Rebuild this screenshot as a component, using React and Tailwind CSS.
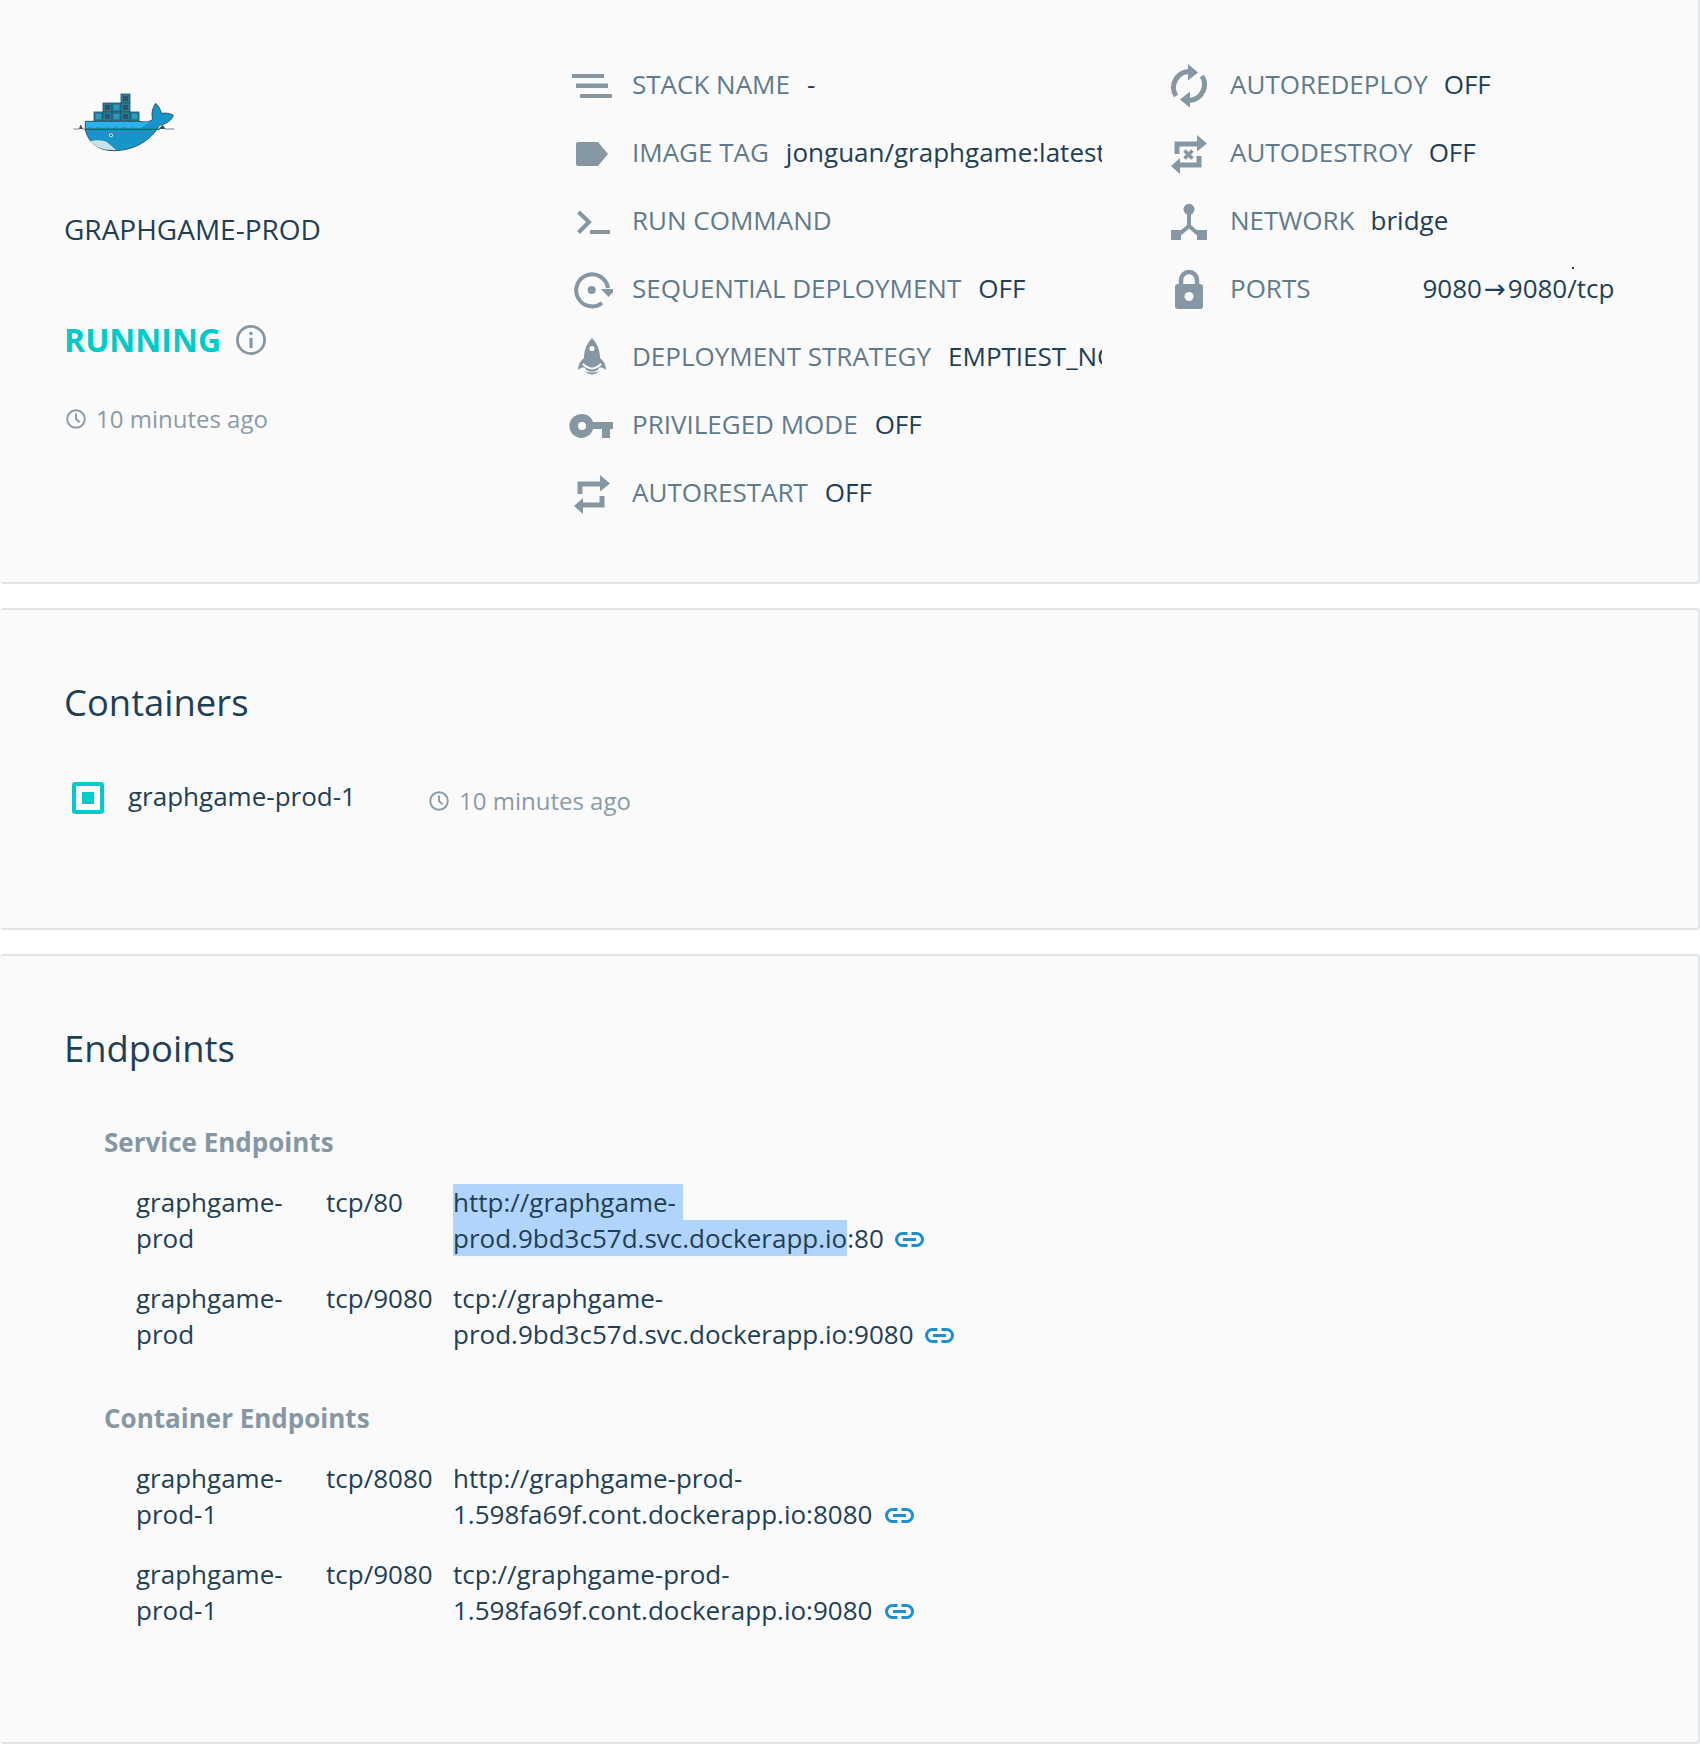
const G = "#8497a2";

function Ic({ children }) {
  return (
    <svg width="44" height="44" viewBox="0 0 44 44" fill={G} className="shrink-0">
      {children}
    </svg>
  );
}

const Retweet = ({ dx = 0 }) => (
  <g transform={`translate(${dx} 0)`}>
    <path d="M11 23V13H32" fill="none" stroke={G} strokeWidth="5" />
    <path d="M31 4L41 12.5L31 20.5Z" />
    <path d="M33 25V34H13" fill="none" stroke={G} strokeWidth="5" />
    <path d="M14 27V43L5 35Z" />
  </g>
);

const icons = {
  stack: (
    <Ic>
      <rect x="3" y="11" width="32" height="4" />
      <rect x="7" y="20.5" width="32" height="4.5" />
      <rect x="11" y="31" width="32" height="4" />
    </Ic>
  ),
  tag: (
    <Ic>
      <path d="M9 11H29L39 23L29 35H9A2 2 0 0 1 7 33V13A2 2 0 0 1 9 11Z" />
    </Ic>
  ),
  term: (
    <Ic>
      <path d="M9.5 13L20 23L9.5 33.5" fill="none" stroke={G} strokeWidth="4" />
      <rect x="21" y="31" width="20" height="4" />
    </Ic>
  ),
  seq: (
    <Ic>
      <path d="M39 21A16 16 0 1 0 33 36" fill="none" stroke={G} strokeWidth="4" />
      <circle cx="22.7" cy="23" r="4" />
      <path d="M32 22H47L39.5 30Z" />
    </Ic>
  ),
  rocket: (
    <Ic>
      <path d="M23 3C18 8 15 15 15 23C11 26 9 30 9 35C11 33 14 32 16 33C18 38 28 38 30 33C32 32 35 33 37 35C37 30 35 26 31 23C31 15 28 8 23 3Z" />
      <circle cx="23" cy="13.5" r="2.6" fill="#fafafa" />
      <path d="M14 29Q23 38 32 29" fill="none" stroke="#fafafa" strokeWidth="2" />
      <path d="M15.5 36Q23 43 30.5 36Q23 39 15.5 36Z" />
    </Ic>
  ),
  key: (
    <Ic>
      <path fillRule="evenodd" d="M13 11A12 12 0 0 1 24 19H45V26H41V35H33V26H24A12 12 0 1 1 13 11ZM13 19A4 4 0 1 0 13 27A4 4 0 1 0 13 19Z" />
    </Ic>
  ),
  restart: (
    <Ic>
      <Retweet />
    </Ic>
  ),
  redeploy: (
    <Ic>
      <path d="M11 33A16 16 0 0 1 24 8.5" fill="none" stroke={G} strokeWidth="5" />
      <path d="M23 1L33 9.5L23 17.5Z" />
      <g transform="rotate(180 24 23)">
        <path d="M11 33A16 16 0 0 1 24 8.5" fill="none" stroke={G} strokeWidth="5" />
        <path d="M23 1L33 9.5L23 17.5Z" />
      </g>
    </Ic>
  ),
  destroy: (
    <Ic>
      <Retweet dx={1} />
      <path d="M19.5 19.5L27.5 27.5M27.5 19.5L19.5 27.5" stroke={G} strokeWidth="3.6" fill="none" />
    </Ic>
  ),
  network: (
    <Ic>
      <circle cx="24" cy="10.3" r="5.5" />
      <path d="M24 12V27L11 38M24 27L37 38" fill="none" stroke={G} strokeWidth="4" />
      <rect x="6" y="31" width="10" height="10" />
      <rect x="32" y="31" width="10" height="10" />
    </Ic>
  ),
  lock: (
    <Ic>
      <path d="M16 20V13A8 8 0 0 1 32 13V20" fill="none" stroke={G} strokeWidth="4.5" />
      <rect x="10" y="17" width="28" height="25" rx="3" />
      <circle cx="24" cy="29.5" r="4.5" fill="#fafafa" />
    </Ic>
  ),
};

function Clock() {
  return (
    <svg width="20" height="20" viewBox="0 0 20 20" fill="none" stroke="#8a9ba8" strokeWidth="1.9" className="shrink-0">
      <circle cx="10" cy="10" r="8.8" />
      <path d="M10 4.5V10L13.6 13.4" />
    </svg>
  );
}

function LinkIcon({ far }) {
  return (
    <svg width="29" height="15" viewBox="0 0 29 15" fill="none" stroke="#1a8fd1" strokeWidth="3" className={`inline-block ${far ? "ml-[13px]" : "ml-[11px]"} align-[1px]`}>
      <path d="M12.5 1.5H7.5A6 6 0 0 0 7.5 13.5H12.5" />
      <path d="M16.5 1.5H21.5A6 6 0 0 1 21.5 13.5H16.5" />
      <path d="M8 7.5H21" />
    </svg>
  );
}

function Docker() {
  const box = (x, y, dark) => (
    <g key={`${x}-${y}`}>
      <rect x={x} y={y} width="27" height="27" fill="#1f7f9c" stroke="#2f5566" strokeWidth="2.5" />
      <rect x={x + 6} y={y + 6} width="15" height="15" fill={dark ? "#37505e" : "#2d9cbf"} />
    </g>
  );
  return (
    <svg width="130" height="80" viewBox="0 0 390 240" className="block">
      {box(183, 42, true)}
      {box(129, 69, true)}
      {box(156, 69, false)}
      {box(183, 69, true)}
      {box(102, 96, false)}
      {box(129, 96, true)}
      {box(156, 96, false)}
      {box(183, 96, true)}
      {box(210, 96, false)}
      <path d="M40 147H58L62 135L68 147H78" fill="#37505e" stroke="#37505e" strokeWidth="2" />
      <path d="M296 147L308 136L316 147H342" fill="#37505e" stroke="#37505e" strokeWidth="2" />
      <path d="M76 124H240C256 128 268 126 278 118C274 102 276 86 287 70C296 78 302 90 304 100C316 98 330 100 340 106C334 124 316 132 298 136C274 180 224 212 160 212C116 212 86 190 76 150Z" fill="#1795c8" stroke="#2f5566" strokeWidth="3" />
      <path d="M78 126H238C250 129 262 128 272 122C262 134 246 142 232 146C222 140 214 140 206 146C198 140 188 140 180 146C172 140 162 140 154 146C146 140 136 140 128 146C120 140 110 140 102 146C94 140 86 140 78 146Z" fill="#29b3ec" />
      <path d="M76 148H298" stroke="#37505e" strokeWidth="4" />
      <path d="M90 184C110 178 130 180 140 186C150 194 160 202 168 210C130 212 106 202 90 184Z" fill="#c7e3ea" />
      <circle cx="153" cy="166" r="6" fill="#d8e8ec" />
      <circle cx="153" cy="166" r="3" fill="#37505e" />
    </svg>
  );
}

function Row({ icon, label, value, gap = "ml-4", wide }) {
  return (
    <div className="flex items-center h-[68px] whitespace-nowrap">
      <span className={`${wide ? "w-[65px]" : "w-[63px]"} shrink-0`}>{icons[icon]}</span>
      <span className="text-[#5f7a8b] shrink-0 mb-[2px]">{label}</span>
      <span className={`text-[#1f3f55] mb-[2px] ${gap}`}>{value}</span>
    </div>
  );
}

function Ep({ name, proto, children }) {
  return (
    <div className="flex leading-[36px] text-[#1f3f55] mt-6 first:mt-0 pl-8">
      <div className="w-[190px] shrink-0">{name}</div>
      <div className="w-[127px] shrink-0">{proto}</div>
      <div>{children}</div>
    </div>
  );
}

export default function App() {
  return (
    <div className="bg-white min-h-[1752px] font-['Open_Sans',sans-serif] text-[26px] text-[#1f3f55] leading-[36px]">
      <section className="bg-[#fafafa] border-b-2 border-r-2 border-[#e1e5e9] rounded-b-[4px] h-[584px] pt-[51px] flex">
        <div className="w-[569px] pl-16 shrink-0">
          <div className="mt-[29px] -ml-1">
            <Docker />
          </div>
          <div className="mt-[51px] text-[28px]">GRAPHGAME-PROD</div>
          <div className="mt-[73px] flex items-center h-10">
            <span className="font-bold text-[32px] text-[#00cbcb]">RUNNING</span>
            <svg width="32" height="32" viewBox="0 0 32 32" fill="none" stroke={G} strokeWidth="2.8" className="ml-[14px]">
              <circle cx="16" cy="16" r="13.6" />
              <path d="M16 14V24" strokeWidth="3.2" />
              <circle cx="16" cy="9.5" r="1.8" fill={G} stroke="none" />
            </svg>
          </div>
          <div className="mt-[41px] flex items-center text-[24px] text-[#8a9ba8] ml-0.5">
            <Clock />
            <span className="ml-[10px]">10 minutes ago</span>
          </div>
        </div>
        <div className="w-[533px] shrink-0 overflow-hidden">
          <Row gap="ml-[17px]" icon="stack" label="STACK NAME" value="-" />
          <Row gap="ml-[17px]" icon="tag" label="IMAGE TAG" value="jonguan/graphgame:latest" />
          <Row gap="ml-[17px]" icon="term" label="RUN COMMAND" value="" />
          <Row gap="ml-[17px]" icon="seq" label="SEQUENTIAL DEPLOYMENT" value="OFF" />
          <Row gap="ml-[17px]" icon="rocket" label="DEPLOYMENT STRATEGY" value="EMPTIEST_NODE" />
          <Row gap="ml-[17px]" icon="key" label="PRIVILEGED MODE" value="OFF" />
          <Row gap="ml-[17px]" icon="restart" label="AUTORESTART" value="OFF" />
        </div>
        <div className="ml-[63px] flex-1">
          <Row wide icon="redeploy" label="AUTOREDEPLOY" value="OFF" />
          <Row wide icon="destroy" label="AUTODESTROY" value="OFF" />
          <Row wide icon="network" label="NETWORK" value="bridge" />
          <div className="relative">
            <Row
              wide
              icon="lock"
              label="PORTS"
              value={
                <>
                  9080<span className="font-['DejaVu_Sans',sans-serif] mx-[2px]">→</span>9080/tcp
                </>
              }
              gap="ml-[112px]"
            />
            <span className="absolute left-[407px] top-[12px] w-[2px] h-[2px] bg-[#1f3f55]" />
          </div>
        </div>
      </section>

      <section className="mt-6 bg-[#fafafa] border-y-2 border-r-2 border-[#e1e5e9] rounded-[4px] h-[322px] pt-[68px] pl-16">
        <h2 className="text-[36.4px] leading-[48px]">Containers</h2>
        <div className="mt-[52px] flex items-center h-9">
          <span className="ml-2 mt-[4px] w-8 h-8 border-4 border-[#00cbcb] rounded-[3px] flex items-center justify-center shrink-0">
            <span className="w-3 h-3 bg-[#00cbcb]" />
          </span>
          <span className="ml-6 w-[301px] shrink-0">graphgame-prod-1</span>
          <span className="flex items-center text-[24px] text-[#8a9ba8] mt-[10px]">
            <Clock />
            <span className="ml-[10px]">10 minutes ago</span>
          </span>
        </div>
      </section>

      <section className="mt-6 bg-[#fafafa] border-y-2 border-r-2 border-[#e1e5e9] rounded-[4px] h-[790px] pt-[68px] pl-16">
        <h2 className="text-[36.4px] leading-[48px]">Endpoints</h2>
        <div className="pl-10 mt-[52px]">
          <h3 className="font-bold text-[#8497a2] leading-[36px]">Service Endpoints</h3>
          <div className="mt-[24px]">
            <Ep name={<>graphgame-<br />prod</>} proto="tcp/80">
              <span className="block w-[230px] h-9 bg-[#b0d4fc]">http://graphgame-</span>
              <span className="inline-block h-9 bg-[#b0d4fc]">prod.9bd3c57d.svc.dockerapp.io</span>:80
              <LinkIcon />
            </Ep>
            <Ep name={<>graphgame-<br />prod</>} proto="tcp/9080">
              tcp://graphgame-<br />prod.9bd3c57d.svc.dockerapp.io:9080
              <LinkIcon />
            </Ep>
          </div>
          <h3 className="font-bold text-[#8497a2] leading-[36px] mt-[48px]">Container Endpoints</h3>
          <div className="mt-[24px]">
            <Ep name={<>graphgame-<br />prod-1</>} proto="tcp/8080">
              http://graphgame-prod-<br />1.598fa69f.cont.dockerapp.io:8080
              <LinkIcon far />
            </Ep>
            <Ep name={<>graphgame-<br />prod-1</>} proto="tcp/9080">
              tcp://graphgame-prod-<br />1.598fa69f.cont.dockerapp.io:9080
              <LinkIcon far />
            </Ep>
          </div>
        </div>
      </section>
    </div>
  );
}
